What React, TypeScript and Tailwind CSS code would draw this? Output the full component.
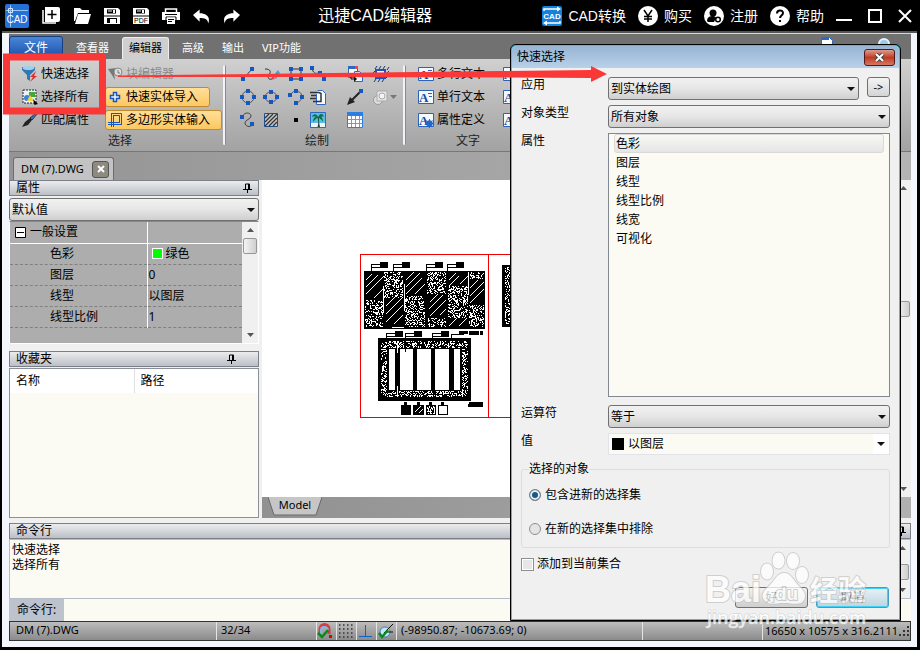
import React, { useState } from 'react';

const FONT = 'font-[Noto_Sans,Noto_Sans_CJK_SC,sans-serif]';

interface RibbonIcon {
  name: string;
  icon: React.ReactNode;
}

const blue = '#1457c0';

// small square grips used on most drawing tools
const Grip = ({ x, y }: { x: number; y: number }) => (
  <rect x={x} y={y} width="4" height="4" fill={blue} />
);

const Svg16 = ({ children, size = 18 }: { children: React.ReactNode; size?: number }) => (
  <svg width={size} height={size} viewBox="0 0 18 18" fill="none" className="shrink-0">
    {children}
  </svg>
);

const drawIcons: RibbonIcon[] = [
  {
    name: '直线',
    icon: <Svg16><path d="M4 13L12 4" stroke="#333" /><Grip x={1} y={12} /><Grip x={10} y={2} /></Svg16>,
  },
  {
    name: '草图',
    icon: <Svg16><path d="M2 4c6 0 6 3 4 6s0 5 3 4" stroke="#333" /><path d="M10 11l5-6 2 3-4 6z" fill="#4a9be0" /><path d="M7 15l3-4 2 3z" fill="#d84a5a" /></Svg16>,
  },
  {
    name: '矩形',
    icon: <Svg16><path d="M4 4h10v10H4z" stroke="#333" /><Grip x={2} y={2} /><Grip x={12} y={2} /><Grip x={2} y={12} /><Grip x={12} y={12} /></Svg16>,
  },
  {
    name: '多段线',
    icon: <Svg16><path d="M3 3c1 5 3 6 7 5" stroke="#333" /><path d="M15 8v5" stroke="#333" /><Grip x={1} y={1} /><Grip x={9} y={6} /><Grip x={13} y={12} /></Svg16>,
  },
  {
    name: '插入块',
    icon: <Svg16><path d="M2.500 1.500h9v11h-9z" fill="#fff" stroke="#2c68c4" /><path d="M2 1h10v3H2z" fill="#2c68c4" /><path d="M8.500 6.500h5l3 3v7h-8z" fill="#eef5ff" stroke="#2c68c4" /><path d="M5 10v4h4" stroke="#111" /><path d="M8 11l3 3-3 3z" fill="#111" /><path d="M9 1h3v3H9z" fill="#e44" /></Svg16>,
  },
  {
    name: '剪裁',
    icon: <Svg16><path d="M4 5h9v8H4z" stroke={blue} strokeWidth="2" fill="#eef5ff" /><path d="M3 4l2-3M7 4l2-3M11 4l2-3M15 5l2-3M14 9l3-3M14 13l3-3M2 17l2-3M6 17l2-3M10 17l2-3M1 8l2-2M1 12l2-2" stroke="#16386f" /></Svg16>,
  },
  {
    name: '圆',
    icon: <Svg16><circle cx="8" cy="9" r="6" stroke="#555" /><Grip x={6} y={1} /><Grip x={6} y={13} /><Grip x={0} y={7} /><Grip x={12} y={7} /></Svg16>,
  },
  {
    name: '椭圆',
    icon: <Svg16><ellipse cx="8" cy="9" rx="6" ry="5" stroke="#555" /><Grip x={6} y={2} /><Grip x={6} y={12} /><Grip x={0} y={7} /><Grip x={12} y={7} /></Svg16>,
  },
  {
    name: '圆弧',
    icon: <Svg16><path d="M4 6c2-4 10-4 11 2 0 3-2 6-6 7" stroke="#555" /><Grip x={1} y={5} /><Grip x={7} y={1} /><Grip x={13} y={7} /><Grip x={7} y={13} /></Svg16>,
  },
  {
    name: '粘贴',
    icon: <Svg16><path d="M8.500 2.500h5l3 3v11h-9V6" fill="#f8fbff" stroke="#2c68c4" /><path d="M1 4.500h9M2 7.500h5M1 10.500h6M4 13.500h8v-8l-2-1" stroke="#333" strokeWidth="1.500" /></Svg16>,
  },
  {
    name: '箭头',
    icon: <Svg16><path d="M6 12l8-8" stroke="#222" strokeWidth="2" /><path d="M1 17l3-8 5 5z" fill="#222" /><Grip x={13} y={1} /></Svg16>,
  },
  {
    name: '区域',
    icon: <Svg16><circle cx="6" cy="12" r="4.500" fill="#ddd" stroke="#999" /><path d="M5 3h10v10H5z" fill="#e6e6e6" stroke="#aaa" /><circle cx="10" cy="8" r="3" fill="#f4f4f4" stroke="#aaa" /></Svg16>,
  },
  {
    name: '样条',
    icon: <Svg16><path d="M3 5c1-4 8-4 8 0 0 3-6 4-6 7s5 5 7 2" stroke="#444" /><Grip x={0} y={4} /><Grip x={10} y={11} /></Svg16>,
  },
  {
    name: '填充',
    icon: <Svg16><path d="M1.500 2.500h13v13h-13z" fill="#c4c4c4" stroke="#234f8f" /><path d="M2 7l4-4M2 11l8-8M2 15L14 3M6 15l8-8M10 15l4-4" stroke="#333" strokeWidth="1.200" /></Svg16>,
  },
  {
    name: '点',
    icon: <Svg16><path d="M7 7h4v4H7z" fill="#000" /></Svg16>,
  },
  {
    name: '图像',
    icon: <Svg16><path d="M1.500 1.500h15v15h-15z" fill="#58bde8" stroke="#2c68c4" /><path d="M2 12h14v4H2z" fill="#eef6fb" /><path d="M8.500 6c1 4 1 7 0 10h2.500c-1-4-1-7-1-10z" fill="#24463a" /><path d="M9 6c-2-4-5-3-6 0 2-1 3-1 4 0-2 0-3 2-3 5 2-2 3-4 5-4 2 0 4 2 5 4 0-3-1-5-2-5 1-1 2-1 3 0-1-4-4-4-6 0z" fill="#0f6f3a" /></Svg16>,
  },
  {
    name: '表格',
    icon: <Svg16><path d="M1.500 1.500h15v15h-15z" fill="#fff" stroke="#2a7fe0" /><path d="M1 1h16v4H1z" fill="#2a7fe0" /><path d="M2 8.500h14M2 12.500h14M5.500 5v11M9.500 5v11M13.500 5v11" stroke="#5aa0ec" /></Svg16>,
  },
];

const TextIcon = ({ gear }: { gear?: boolean }) => (
  <svg width="16" height="16" viewBox="0 0 16 16" fill="none" className="shrink-0">
    <path d="M.5 1.500h15v13H.5z" fill="#f4f8ff" stroke="#2a63b8" />
    <text x="1" y="13" fontSize="13" fontWeight="700" fill="#164a9c" fontFamily="Liberation Serif">A</text>
    {gear ? (
      <g stroke="#2468c8">
        <circle cx="11.500" cy="11.500" r="2.500" fill="#cfe3ff" strokeWidth="1.500" />
        <path d="M11.500 7v9M7 11.500h9M8.500 8.500l6 6M14.500 8.500l-6 6" />
      </g>
    ) : (
      <path d="M10 4.500h4M11 7.500h3" stroke="#2a63b8" />
    )}
  </svg>
);

const titleTools: RibbonIcon[] = [
  {
    name: '新建',
    icon: <svg width="18" height="18" viewBox="0 0 18 18"><path d="M3 0h13a2 2 0 012 2v11a2 2 0 01-2 2H3z" fill="#fff" /><path d="M1 3v13h13" stroke="#fff" strokeWidth="1.500" fill="none" /><path d="M10 3v9M5.500 7.500h9" stroke="#000" strokeWidth="1.500" /></svg>,
  },
  {
    name: '打开',
    icon: <svg width="18" height="16" viewBox="0 0 18 16"><path d="M1 0h6l2 2h7v3H5L2 13H1z" fill="#fff" /><path d="M5 6h13l-3 10H2z" fill="#fff" /></svg>,
  },
  {
    name: '保存',
    icon: <svg width="16" height="16" viewBox="0 0 16 16"><path d="M0 0h14l2 2v14H0z" fill="#fff" /><path d="M3 1.500h9v4H3zM0 7.500h16v1H0zM3 10h10v5H3z" fill="#000" /><path d="M9 2h2v3H9zM4 2.500h4v1H4zM6 11h6v4H6z" fill="#fff" /></svg>,
  },
  {
    name: '另存为 PDF',
    icon: <svg width="16" height="16" viewBox="0 0 16 16"><path d="M0 0h14l2 2v14H0z" fill="#fff" /><path d="M3 1.500h9v4H3zM0 7.500h16v1H0z" fill="#000" /><path d="M9 2h2v3H9zM4 2.500h4v1H4z" fill="#fff" /><text x="8" y="15" fontSize="7" textAnchor="middle" fontFamily="Liberation Sans">PDF</text></svg>,
  },
  {
    name: '打印',
    icon: <svg width="18" height="16" viewBox="0 0 18 16" fill="none"><path d="M3.500 4V1h11v3" stroke="#fff" strokeWidth="1.500" /><path d="M0 4h18v8H0z" fill="#fff" /><path d="M3 6.500h12M4 9h10v6H4z" stroke="#000" /><path d="M5 9.500h8v6.500H5z" fill="#fff" /><path d="M6 11.500h6M6 13.500h4" stroke="#000" /></svg>,
  },
  {
    name: '撤销',
    icon: <svg width="17" height="16" viewBox="0 0 18 16"><path d="M0 7l7-6v4c7 0 12 4 9 11 0-5-4-6-9-6v4z" fill="#fff" /></svg>,
  },
  {
    name: '重做',
    icon: <svg width="17" height="16" viewBox="0 0 18 16"><path d="M18 7l-7-6v4C4 5-1 9 2 16c0-5 4-6 9-6v4z" fill="#fff" /></svg>,
  },
];

const Round = ({ children }: { children: React.ReactNode }) => (
  <svg width="20" height="20" viewBox="0 0 20 20" fill="none">
    <circle cx="10" cy="10" r="10" fill="#fff" />
    {children}
  </svg>
);

const titleLinks: RibbonIcon[] = [
  {
    name: 'CAD转换',
    icon: (
      <svg width="20" height="20" viewBox="0 0 20 20" fill="none">
        <rect width="20" height="20" rx="2" fill="#1583dc" />
        <path d="M2 5V3h14M18 15v2H4" stroke="#fff" strokeWidth="1.500" />
        <path d="M15 .5L19 3l-4 2.500zM5 14.500L1 17l4 2.500z" fill="#fff" />
        <text x="10" y="13" fontSize="8" fontWeight="700" fill="#fff" textAnchor="middle" fontFamily="Liberation Sans">CAD</text>
      </svg>
    ),
  },
  {
    name: '购买',
    icon: <Round><path d="M6 4l4 6 4-6M10 10v6M6 10.500h8M6 13h8" stroke="#000" strokeWidth="1.500" /></Round>,
  },
  {
    name: '注册',
    icon: <Round><circle cx="9" cy="7" r="3.500" fill="#000" /><path d="M3 15c0-4 3-5 6-5 2 0 3 1 3 2l-2 4H4z" fill="#000" /><circle cx="14" cy="13.500" r="2.300" stroke="#000" strokeWidth="1.500" fill="#fff" /></Round>,
  },
  {
    name: '帮助',
    icon: <Round><path d="M7 7.500c0-4 6-4 6-.5 0 2.500-3 2.500-3 5" stroke="#000" strokeWidth="2" /><path d="M9 14h2v2H9z" fill="#000" /></Round>,
  },
];

const tabs = ['查看器', '编辑器', '高级', '输出', 'VIP功能'];

const properties = [
  { label: '色彩', value: '绿色', swatch: true },
  { label: '图层', value: '0' },
  { label: '线型', value: '以图层' },
  { label: '线型比例', value: '1' },
];

const attributes = ['色彩', '图层', '线型', '线型比例', '线宽', '可视化'];

const Triangle = ({ up }: { up?: boolean }) => (
  <svg width="8" height="4" viewBox="0 0 8 4" className="shrink-0">
    <path d={up ? 'M0 4h8L4 0z' : 'M0 0h8L4 4z'} fill="#111" />
  </svg>
);

const Pin = () => (
  <svg width="9" height="10" viewBox="0 0 9 10" fill="none">
    <path d="M2.500 6V1h4v5M0 6.500h9M4.500 7v3M5.500 1v5" stroke="#000" />
  </svg>
);

const PanelHeader = ({ title, pinClass = 'mr-2' }: { title: string; pinClass?: string }) => (
  <div className="flex h-4 items-center justify-between border border-[#7b7f87] bg-gradient-to-b from-[#ebecee] to-[#bcc0c6] pl-1.5">
    <h2 className="text-xs leading-4">{title}</h2>
    <button aria-label={`固定${title}`} className={pinClass}><Pin /></button>
  </div>
);

interface ComboProps {
  id: string;
  label?: string;
  options: string[];
  plain?: boolean;
}

const Combo = ({ id, label, options, plain }: ComboProps) => (
  <div className="relative flex min-w-0 flex-1 items-center">
    <select
      id={id}
      aria-label={label}
      className={
        plain
          ? 'h-[22px] w-full appearance-none border border-[#e2e3ea] bg-[#fcfbf3] pl-[19px] text-xs outline-none'
          : 'h-[23px] w-full appearance-none rounded-[3px] border border-[#707070] bg-gradient-to-b from-[#f2f2f2] via-[#e6e6e6] to-[#cfcfcf] pl-[2px] text-xs outline-none'
      }
    >
      {options.map((o) => <option key={o}>{o}</option>)}
    </select>
    {plain && <span className="pointer-events-none absolute left-1 size-3 bg-black" />}
    <span className={plain ? 'pointer-events-none absolute right-px flex h-5 w-4 items-center justify-center bg-white' : 'pointer-events-none absolute right-1'}>
      <Triangle />
    </span>
  </div>
);

const ScrollBar = ({ thumb }: { thumb: string }) => (
  <div className="flex w-4 shrink-0 flex-col items-center justify-between bg-[#f0f0f0] py-1.5">
    <svg width="7" height="4"><path d="M0 4h7L3.500 0z" fill="#555" /></svg>
    <div className="flex w-full flex-1 flex-col px-px">
      <div className={thumb} />
      <div className="h-4 rounded-[2px] border border-[#979797] bg-gradient-to-r from-[#f4f4f4] to-[#cfcfcf]" />
    </div>
    <svg width="7" height="4"><path d="M0 0h7L3.500 4z" fill="#555" /></svg>
  </div>
);

// Speckled and hatched fills are built once from a seeded generator
const speckle = (x: number, y: number, w: number, h: number, seed: number) => {
  let s = seed;
  let d = '';
  for (let j = 0; j < h; j++) {
    for (let i = 0; i < w; i++) {
      s = (s * 1103515245 + 12345) % 2147483648;
      if (s / 2147483648 < 0.36) d += `M${x + i} ${y + j}h1v1h-1z`;
    }
  }
  return d;
};

const speckles = [
  [365, 300, 18, 27], [384, 272, 19, 26], [405, 296, 20, 31], [427, 272, 19, 22],
  [428, 318, 18, 9], [448, 286, 20, 32], [470, 272, 14, 7], [469, 305, 15, 22],
  [381, 341, 87, 7], [381, 391, 87, 6], [381, 349, 6, 42], [462, 349, 6, 42],
  [505, 267, 16, 57],
].map(([x, y, w, h], i) => speckle(x, y, w, h, 97 + i * 131)).join('');

const hatch = [
  [366, 280, 6], [366, 287, 12], [366, 294, 18], [374, 298, 9], [386, 306, 12], [386, 314, 16], [386, 322, 17], [394, 324, 9],
  [406, 280, 8], [406, 287, 14], [406, 294, 16], [415, 294, 10], [430, 302, 8], [429, 309, 14], [430, 316, 16], [440, 315, 6],
  [449, 280, 7], [449, 286, 10], [460, 284, 8], [449, 326, 8], [459, 326, 8], [470, 288, 8], [470, 296, 14], [470, 303, 14],
].map(([x, y, n]) => `M${x} ${y}l${n}-${n}`).join('');

const callouts = [[371, 262], [393, 262], [426, 262], [447, 262], [386, 331], [405, 331], [432, 331]];

const Drawing = () => (
  <svg width="260" height="250" viewBox="262 180 260 250" fill="none" shapeRendering="crispEdges" role="img" aria-label="DM (7).DWG">
    <path d="M360.500 254.500H530M360.500 417.500H530M360.500 254v164M488.500 254v164" stroke="#f00000" />
    {callouts.map(([x, y]) => (
      <g key={`${x}-${y}`}>
        <path d={`M${x + 0.5} ${y + 9}v-7h9M${x + 1} ${y + 5.5}h8`} stroke="#000" />
        <path d={`M${x + 9} ${y}h8v6h-8z`} fill="#000" />
      </g>
    ))}
    <path d="M451.500 338v-4h12" stroke="#000" />
    <path d="M459 331h9v3h-9zM469 331h10v4h-10zM480 331h3v4h-3zM469 402h14v5h-15v-3h1z" fill="#000" />
    <path d="M364 271h121v58H364zM378 338h93v63h-93zM502 265h20v62h-20z" fill="#000" />
    <path d={speckles} fill="#fff" />
    <path d={hatch} stroke="#fff" />
    <path d="M383.500 286v27M404.500 284v27M468.500 272v23M392 327.500h12" stroke="#fff" />
    <path d="M388 349h73v41h-73z" fill="#000" />
    <path d="M389 349h6v41h-6zM400 349h13v41h-13zM417 349h14v41h-14zM435 349h14v41h-14zM454 349h6v41h-6z" fill="#fff" />
    <path d="M397.500 341v12M397.500 386v11" stroke="#fff" />
    <path d="M405.500 345v7" stroke="#000" />
    <path d="M401 405h10v10h-10zM413 405h11v10h-11zM404 402h3v3h-3zM417 402h3v3h-3zM429 402h3v3h-3zM441 402h3v3h-3z" fill="#000" />
    <path d="M415 412l6-6M419 413l4-4" stroke="#fff" />
    <path d="M426 405h10v10h-10z" fill="#000" />
    <path d={speckle(427, 406, 8, 8, 31)} fill="#fff" />
    <path d="M438.500 405.500h9v9h-9z" stroke="#000" />
  </svg>
);

const TitleBar = () => (
  <header className="flex h-[31px] items-center justify-between bg-black pl-[5px] pr-2 text-white">
    <div className="flex items-center">
      <svg width="24" height="24" viewBox="0 0 24 24" fill="none">
        <rect width="24" height="24" rx="2" fill="#2472d8" />
        <path d="M5.500 1v22M1 6.500h22" stroke="#9cc6f8" />
        <path d="M3.500 4.500h4v4h-4z" stroke="#d6e8ff" />
        <text x="12" y="19" fontSize="10" fill="#fff" textAnchor="middle" fontFamily="Liberation Sans">CAD</text>
      </svg>
      <div className="ml-[13px] flex items-center gap-[13px]">
        {titleTools.map((t) => (
          <button key={t.name} aria-label={t.name}>{t.icon}</button>
        ))}
      </div>
    </div>
    <h1 className="mr-8 text-base leading-5 font-[Liberation_Sans,Noto_Sans_CJK_SC,sans-serif]">迅捷CAD编辑器</h1>
    <div className="flex items-center gap-3 font-[Liberation_Sans,Noto_Sans_CJK_SC,sans-serif]">
      {titleLinks.map((t) => (
        <a key={t.name} href="#" className="flex items-center gap-1.5 text-sm">{t.icon}{t.name}</a>
      ))}
      <div className="flex items-center gap-4">
        <button aria-label="最小化"><svg width="16" height="14"><path d="M0 11h16" stroke="#fff" strokeWidth="2" /></svg></button>
        <button aria-label="最大化"><svg width="14" height="14"><path d="M1 1h12v12H1z" stroke="#fff" strokeWidth="2" fill="none" /></svg></button>
        <button aria-label="关闭"><svg width="14" height="14"><path d="M1 1l12 12M13 1L1 13" stroke="#fff" strokeWidth="2" /></svg></button>
      </div>
    </div>
  </header>
);

const Separator = () => (
  <div className="my-1.5 w-[3px] shrink-0 rounded border-r border-[#8a8a8a] bg-[#f2f2f8]" />
);

const Ribbon = () => {
  const [active, setActive] = useState('编辑器');

  return (
    <div className="shrink-0">
      <nav className="flex h-[26px] items-end justify-between border-t border-[#d8d8d8] bg-[#717171] text-[11px] text-white">
        <div className="flex items-end">
          <button className="mr-1 h-[23px] w-[54px] rounded-t-[3px] border border-[#173f7c] bg-gradient-to-b from-[#4a86d8] to-[#1a4fa8] text-xs">文件</button>
          {tabs.map((t) => (
            <button
              key={t}
              onClick={() => setActive(t)}
              className={
                active === t
                  ? 'mx-1 h-[22px] rounded-t-[3px] border border-b-0 border-[#eee] bg-[#cfcfcf] px-[6px] text-black'
                  : 'h-[22px] px-[9px]'
              }
            >
              {t}
            </button>
          ))}
        </div>
        <div className="mr-5 flex h-full items-start gap-11 pt-[3px]">
          <svg width="12" height="12"><path d="M.5.5h8l3 3v8H.5z" fill="#fff" stroke="#2c68c4" /><path d="M1 1h7v2H1z" fill="#2c68c4" /></svg>
          <svg width="14" height="14"><circle cx="7" cy="7" r="5" fill="#9ccbe8" stroke="#e6f3fb" strokeWidth="2" /></svg>
        </div>
      </nav>

      <div className="flex h-[93px] border-b border-[#777] bg-gradient-to-b from-[#d0d0d0] to-[#a2a2a2] text-xs">
        <section className="flex w-[214px] shrink-0 flex-col pt-[3px]">
          <div className="flex">
            <div className="flex w-24 flex-col pl-[13px]">
              <button className="flex h-[23px] items-center gap-[3px]">
                <svg width="16" height="16" viewBox="0 0 16 16"><path d="M0 1h13v3L8 9v6l-3-2V9L0 4z" fill="#2f78b8" /><ellipse cx="6.500" cy="2" rx="6" ry="2" fill="#9fd0ee" /><path d="M14 5L8 11h3l-3 5 7-6h-3z" fill="#e22b2b" /></svg>
                快速选择
              </button>
              <button className="flex h-[23px] items-center gap-[3px]">
                <svg width="16" height="16" viewBox="0 0 16 16"><path d="M1 1h13v13H1z" fill="#e8f2f8" stroke="#222" strokeDasharray="2 1" /><path d="M7 3h6v5H7z" fill="#44a838" /><circle cx="5" cy="9" r="3" fill="#3b84d8" /><path d="M5 12l3-6 4 6z" fill="#f0d43c" /><path d="M11 10l5 5-2 .5L12.500 16z" fill="#000" /></svg>
                选择所有
              </button>
              <button className="flex h-[23px] items-center gap-[3px]">
                <svg width="16" height="16" viewBox="0 0 16 16"><path d="M14 1l1 1-5 6-2-2z" fill="#3a79c8" stroke="#234" /><path d="M8 6l2 2-4 5-6 2 3-5z" fill="#222" /></svg>
                匹配属性
              </button>
            </div>
            <div className="flex flex-col items-start">
              <button disabled className="flex h-[23px] items-center gap-[3px] pl-0.5 text-[#8b8b8b]">
                <svg width="16" height="16" viewBox="0 0 16 16"><path d="M1 3l8-1-2 5 1 7-3-5z" fill="#777" /><circle cx="11" cy="6" r="4" fill="#ddd" stroke="#888" /><path d="M11 4v3h2" stroke="#777" fill="none" /></svg>
                块编辑器
              </button>
              <div className="flex h-[23px] items-center">
                <button className="flex h-5 w-[105px] items-center gap-[5px] rounded-[3px] border border-[#c28a2c] bg-gradient-to-b from-[#ffdf98] to-[#fcc860] pl-[3px]">
                  <svg width="12" height="12" viewBox="0 0 12 12"><path d="M4.500 1.500h3v3h3v3h-3v3h-3v-3h-3v-3h3z" fill="#eef4ff" stroke={blue} strokeWidth="1.500" /></svg>
                  快速实体导入
                </button>
              </div>
              <div className="flex h-[23px] items-center">
                <button className="flex h-5 w-[117px] items-center gap-[3px] rounded-[3px] border border-[#c28a2c] bg-gradient-to-b from-[#ffdf98] to-[#fcc860] pl-[2px]">
                  <svg width="15" height="15" viewBox="0 0 15 15"><path d="M3.500 1v14M5.500 3v12M0 10.500h12M0 12.500h14M3.500 1.500h10v11M5.500 3.500h6v7" stroke={blue} fill="none" /></svg>
                  多边形实体输入
                </button>
              </div>
            </div>
          </div>
          <h3 className="pl-2 text-center leading-5 text-[#222]">选择</h3>
        </section>
        <Separator />
        <section className="flex w-[177px] shrink-0 flex-col pl-3.5 pt-[3px]">
          <div className="grid grid-cols-[23px_24px_22px_37px_26px_31px]">
            {drawIcons.map((d) => (
              <button key={d.name} aria-label={d.name} className="flex h-[23px] items-center">
                {d.icon}
                {d.name === '区域' && <svg width="7" height="4"><path d="M0 0h7L3.500 4z" fill="#777" /></svg>}
              </button>
            ))}
          </div>
          <h3 className="pr-[9px] text-center leading-5 text-[#222]">绘制</h3>
        </section>
        <Separator />
        <section className="flex min-w-0 flex-1 flex-col overflow-hidden pl-3 pt-[3px]">
          <div className="grid grid-cols-[85px_16px]">
            <button className="flex h-[23px] items-center gap-[3px]"><TextIcon />多行文本</button>
            <button aria-label="查找"><TextIcon /></button>
            <button className="flex h-[23px] items-center gap-[3px]"><TextIcon />单行文本</button>
            <button aria-label="拼写"><TextIcon /></button>
            <button className="flex h-[23px] items-center gap-[3px]"><TextIcon gear />属性定义</button>
            <button aria-label="样式"><TextIcon /></button>
          </div>
          <h3 className="pl-[38px] leading-5 text-[#222]">文字</h3>
        </section>
      </div>

      <div className="flex h-7 items-end bg-gradient-to-r from-[#949494] to-[#b4b4b4] pl-1 text-[11px]">
        <div className="flex h-[23px] w-[101px] items-center justify-between rounded-t-[3px] border border-b-0 border-[#6d6d6d] bg-[#c3c3c3] pl-[7px] pr-1">
          DM (7).DWG
          <button aria-label="关闭 DM (7).DWG" className="flex size-[17px] items-center justify-center rounded-[3px] border border-[#555] bg-[#8e8a80]">
            <svg width="8" height="8"><path d="M1 1l6 6M7 1L1 7" stroke="#fff" strokeWidth="2" /></svg>
          </button>
        </div>
      </div>
    </div>
  );
};

const LeftPanel = () => (
  <aside className="flex w-[250px] shrink-0 flex-col">
    <PanelHeader title="属性" pinClass="mr-1.5" />
    <div className="mt-0.5 flex"><Combo id="preset" label="属性预设" options={['默认值']} /></div>
    <div className="flex h-[123px] border border-white border-t-[#888] bg-[#adadad]">
      <div className="flex-1">
        <table className="w-full border-collapse text-xs">
          <thead>
            <tr className="h-[21px] border-b border-white">
              <th className="w-[137px] border-r border-white p-0 text-left font-normal">
                <span className="flex items-center gap-1 pl-[5px]">
                  <svg width="11" height="11"><path d="M.5.5h10v10H.5z" fill="#fff" stroke="#000" /><path d="M2 5.500h7" stroke="#000" /></svg>
                  一般设置
                </span>
              </th>
              <th />
            </tr>
          </thead>
          <tbody>
            {properties.map((p) => (
              <tr key={p.label} className="h-[21px] border-b border-dashed border-[#808080]">
                <td className="border-r border-solid border-r-white py-0 pl-10 leading-4">{p.label}</td>
                <td className="py-0 pl-px leading-4">
                  <span className="flex items-center gap-[3px]">
                    {p.swatch && <span className="ml-[3px] size-[11px] border border-white bg-[#00ff00]" />}
                    {p.value}
                  </span>
                </td>
              </tr>
            ))}
          </tbody>
        </table>
      </div>
      <ScrollBar thumb="h-1.5" />
    </div>
    <div className="mt-[7px]"><PanelHeader title="收藏夹" pinClass="mr-[22px]" /></div>
    <div className="mt-px flex-1 border border-[#8a8f98] bg-[#fcfbf3]">
      <table className="w-full text-xs">
        <thead>
          <tr className="h-6 bg-white">
            <th className="w-[124px] border-r border-[#e0e0e0] p-0 pl-1.5 text-left font-normal">名称</th>
            <th className="p-0 pl-1.5 text-left font-normal">路径</th>
          </tr>
        </thead>
      </table>
    </div>
  </aside>
);

const CommandPanel = () => (
  <section className="mt-[5px] shrink-0 text-xs">
    <PanelHeader title="命令行" pinClass="mr-1" />
    <div className="flex h-[60px] border border-[#b4bcc8] bg-[#fcfbf3]">
      <div className="flex-1 pl-0.5 pt-[2px] leading-[15px]">
        <p>快速选择</p>
        <p>选择所有</p>
      </div>
      <ScrollBar thumb="h-3.5" />
    </div>
    <div className="flex h-[22px]">
      <label htmlFor="cmd" className="w-[55px] bg-[#bdc3cc] pl-2 leading-[22px]">命令行:</label>
      <input id="cmd" className="flex-1 bg-[#fcfbf3] px-1 outline-none" />
    </div>
  </section>
);

const StatusBar = () => (
  <footer className="flex h-5 shrink-0 items-stretch border border-[#333] bg-gradient-to-b from-[#bdbdbd] to-[#8b8b8b] text-[11px] leading-4">
    <span className="w-[207px] border-r border-[#e4e4e4] pl-1.5">DM (7).DWG</span>
    <span className="w-[100px] border-r border-[#e4e4e4] pl-1">32/34</span>
    <button aria-label="捕捉" className="w-5 border-r border-[#e4e4e4]">
      <svg width="16" height="16" viewBox="0 0 16 16" fill="none"><path d="M3 11V6c0-6 9-6 9 0v5" stroke="#d83c3c" strokeWidth="3" /><path d="M4 11V7c0-4 6-4 7 0" stroke="#86b4e8" strokeWidth="2" /><path d="M1 10l4 4 6-7" stroke="#0a8a1a" strokeWidth="2.500" /><path d="M12 12h3v3h-3z" fill="#d00" /></svg>
    </button>
    <button aria-label="栅格" className="w-5 border-r border-[#e4e4e4]">
      <svg width="17" height="16" viewBox="0 0 17 16"><path d="M2 2h14M2 6h14M2 10h14M2 14h14" stroke="#333" strokeWidth="1.500" strokeDasharray="1.500 2.500" /></svg>
    </button>
    <button aria-label="正交" className="w-5 border-r border-[#e4e4e4]">
      <svg width="17" height="16"><path d="M8.500 2v11M2 13.500h13" stroke="#1060d0" /></svg>
    </button>
    <button aria-label="对象捕捉" className="w-5 border-r border-[#e4e4e4]">
      <svg width="17" height="16" viewBox="0 0 17 16" fill="none"><circle cx="8" cy="9" r="5" fill="#c8e4f8" stroke="#3a84c8" /><path d="M16 1L7 10M9 9h7" stroke="#111" /><path d="M2 10l3 4 6-7" stroke="#0a8a1a" strokeWidth="2.500" /></svg>
    </button>
    <span className="flex-1 pl-1">(-98950.87; -10673.69; 0)</span>
    <span className="w-[121px] border-x border-[#e4e4e4]" />
    <span className="flex w-[147px] items-center justify-between whitespace-nowrap pl-0.5 pr-px">
      16650 x 10575 x 316.2111
      <svg width="10" height="10" viewBox="0 0 10 10" className="shrink-0"><path d="M8 0h2v2H8zM4 4h2v2H4zM8 4h2v2H8zM0 8h2v2H0zM4 8h2v2H4zM8 8h2v2H8z" fill="#333" /></svg>
    </span>
  </footer>
);

const QuickSelectDialog = () => {
  const [mode, setMode] = useState('include');

  return (
    <div role="dialog" aria-label="快速选择" className="absolute left-[510px] top-11 w-[391px] rounded-t-md border border-black bg-[#35c5ea] p-px text-xs">
      <div className="rounded-t-[5px] bg-[#f0f0f0]">
        <div className="flex h-[22px] items-center justify-between rounded-t-[5px] bg-gradient-to-b from-[#97b4d3] to-[#b9d1ea] pl-[5px] pr-1">
          <h2>快速选择</h2>
          <button aria-label="关闭" className="flex h-[17px] w-[31px] items-center justify-center rounded-[3px] border border-[#551818] bg-gradient-to-b from-[#dd9a8c] via-[#bf3a22] to-[#d4775e]">
            <svg width="11" height="9"><path d="M2 1l7 7M9 1L2 8" stroke="#444" strokeWidth="4" /><path d="M2 1l7 7M9 1L2 8" stroke="#fff" strokeWidth="2" /></svg>
          </button>
        </div>
        <form className="px-[9px] pb-[11px] pt-[9px]" onSubmit={(e) => e.preventDefault()}>
          <div className="grid grid-cols-[87px_minmax(0,1fr)] gap-y-[5px]">
            <label htmlFor="apply" className="leading-4">应用</label>
            <div className="flex items-start gap-2">
              <Combo id="apply" options={['到实体绘图']} />
              <button className="h-5 w-[23px] rounded-[3px] border border-[#707070] bg-gradient-to-b from-[#f4f4f4] to-[#d4d4d4] text-[11px] leading-4">-&gt;</button>
            </div>
            <label htmlFor="kind" className="leading-4">对象类型</label>
            <div className="flex"><Combo id="kind" options={['所有对象']} /></div>
            <span className="leading-4">属性</span>
            <ul className="h-[264px] border border-[#828790] bg-[#fcfbf3] px-[5px]">
              {attributes.map((a, i) => (
                <li
                  key={a}
                  className={
                    i === 0
                      ? 'h-[19px] rounded-[3px] border border-[#d9d9d9] bg-gradient-to-b from-[#f8f8f4] to-[#e5e5e5] pl-px leading-[17px]'
                      : 'h-[19px] pl-0.5 leading-[19px]'
                  }
                >
                  {a}
                </li>
              ))}
            </ul>
            <label htmlFor="op" className="mt-[3px] leading-4">运算符</label>
            <div className="mt-[3px] flex"><Combo id="op" options={['等于']} /></div>
            <label htmlFor="val" className="leading-4">值</label>
            <div className="flex"><Combo id="val" options={['以图层']} plain /></div>
          </div>

          <fieldset className="mt-1.5 h-[87px] rounded-[3px] border border-[#d5dfe5] pl-[7px]">
            <legend className="leading-4">选择的对象</legend>
            <label className="mt-2 flex h-5 items-center gap-1">
              <input type="radio" name="mode" checked={mode === 'include'} onChange={() => setMode('include')} className="size-3 appearance-none rounded-full border border-[#7d8287] bg-[#f4f4f4] checked:bg-[#155b84] checked:shadow-[inset_0_0_0_2px_#e8eef2]" />
              包含进新的选择集
            </label>
            <label className="mt-[14px] flex h-5 items-center gap-1">
              <input type="radio" name="mode" checked={mode === 'exclude'} onChange={() => setMode('exclude')} className="size-3 appearance-none rounded-full border border-[#8e8f8f] bg-[#e4e4e4] checked:bg-[#155b84] checked:shadow-[inset_0_0_0_2px_#e8eef2]" />
              在新的选择集中排除
            </label>
          </fieldset>

          <label className="mt-[7px] flex h-[18px] items-center gap-[3px]">
            <input type="checkbox" className="size-[13px] appearance-none border border-[#8e8f8f] bg-[#e6e6e6] shadow-[inset_0_0_0_1px_#fff] checked:bg-[#155b84]" />
            添加到当前集合
          </label>

          <div className="mt-[14px] flex justify-end gap-2 pr-px">
            <button className="h-[21px] w-[73px] rounded-[3px] border border-[#707070] bg-gradient-to-b from-[#f2f2f2] to-[#cfcfcf] leading-4">好</button>
            <button className="h-[21px] w-[73px] rounded-[3px] border border-[#3c9fc8] bg-gradient-to-b from-[#e8f3f8] to-[#bcd4de] leading-4 shadow-[inset_0_0_0_1px_#3fd0f6]">取消</button>
          </div>
        </form>
      </div>
    </div>
  );
};

const Watermark = () => (
  <svg width="180" height="84" viewBox="700 548 180 84" className="pointer-events-none absolute left-[700px] top-[548px]" aria-hidden="true">
    <g fill="#fff" stroke="#c4c4c4" strokeWidth="2" strokeLinejoin="round" paintOrder="stroke" opacity=".75" fontFamily="Liberation Sans, Noto Sans CJK SC">
      <text x="705" y="602" fontSize="36" fontWeight="700">Bai</text>
      <ellipse cx="767" cy="571.500" rx="6" ry="8" />
      <ellipse cx="778.500" cy="560.500" rx="6" ry="8" />
      <ellipse cx="793" cy="561" rx="6" ry="8" />
      <ellipse cx="802" cy="575" rx="6" ry="8" />
      <path d="M784 573c7 0 9 7 14 12s9 9 6 15-11 3-20 3-16 3-20-3 1-10 6-15 7-12 14-12z" />
      <text x="775" y="600" fontSize="19" fontWeight="700">du</text>
      <text x="810" y="601" fontSize="28" fontWeight="700">经验</text>
      <text x="707" y="624" fontSize="18" fontFamily="Open Sans" fontWeight="600" strokeWidth="1">jingyan.baidu.com</text>
    </g>
  </svg>
);

const Callout = () => (
  <svg width="620" height="120" className="pointer-events-none absolute left-0 top-0" fill="none" aria-hidden="true">
    <rect x="6.500" y="57" width="96" height="54" stroke="#fb3838" strokeWidth="7" />
    <path d="M118 75.500L290 73.500 500 71l91-1v-4l16 8-16 8v-4l-91-.5-210-.5-172 0z" fill="#fb3838" />
  </svg>
);

const App: React.FC = () => (
  <div className={`relative flex min-h-screen w-full flex-col overflow-hidden bg-black text-black ${FONT}`}>
    <TitleBar />
    <div className="mb-[3px] ml-0.5 mr-[3px] flex flex-1 flex-col bg-[#f3f6fd] pb-1.5 pl-[7px] pr-1.5">
      <div className="-ml-[7px] -mr-1.5 h-0.5 bg-[#555]" />
      <Ribbon />
      <div className="flex flex-1 bg-[#f0f0f0]">
        <LeftPanel />
        <main className="ml-[3px] flex min-w-0 flex-1 flex-col">
          <div className="flex flex-1 bg-white">
            <div className="min-w-0 flex-1 overflow-hidden"><Drawing /></div>
            <ScrollBar thumb="h-[111px]" />
          </div>
          <div className="h-[21px] bg-gradient-to-r from-[#919191] to-[#b0b0b0] pl-1.5">
            <button className="relative flex h-[17px] w-[54px] items-center justify-center text-[11px]">
              <svg width="54" height="19" className="absolute left-0 top-0"><path d="M0 0l6 18h42l6-18" fill="#c6c6c6" stroke="#6a6a6a" /></svg>
              <span className="relative">Model</span>
            </button>
          </div>
        </main>
      </div>
      <div className="bg-[#f0f0f0]"><CommandPanel /></div>
      <StatusBar />
    </div>
    <QuickSelectDialog />
    <Callout />
    <Watermark />
  </div>
);

export default App;
